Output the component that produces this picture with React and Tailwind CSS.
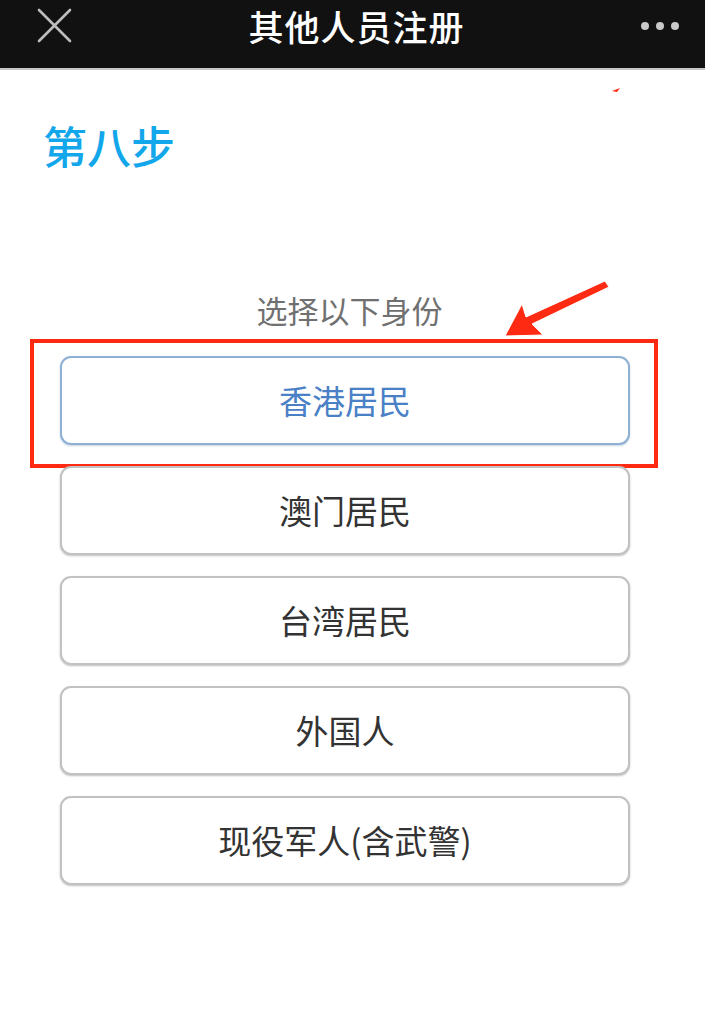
import React from 'react';

const options = ['香港居民', '澳门居民', '台湾居民', '外国人', '现役军人(含武警)'];

const font = { fontFamily: '"Noto Sans CJK SC", "Noto Sans", sans-serif' };

const App = () => {
  return (
    <div className="relative w-[705px] min-h-[1024px] bg-white" style={font}>
      {/* Top bar */}
      <div className="h-[68px] bg-[#111111] flex items-start justify-between px-[36px] border-b-2 border-[#c8c8c8] box-content">
        <svg width="36" height="36" viewBox="0 0 36 36" className="mt-[8px]">
          <path d="M3 2 L34 33 M34 2 L3 33" stroke="#bdbdbd" strokeWidth="2.6" strokeLinecap="round" />
        </svg>
        <div className="text-white text-[35px] font-medium leading-[44px] tracking-[1px] mt-[4px]">其他人员注册</div>
        <div className="flex gap-[7px] -mr-[10px] mt-[22px]">
          <span className="w-[8px] h-[8px] rounded-full bg-[#c9c9c9]" />
          <span className="w-[8px] h-[8px] rounded-full bg-[#c9c9c9]" />
          <span className="w-[8px] h-[8px] rounded-full bg-[#c9c9c9]" />
        </div>
      </div>

      {/* Step heading */}
      <div className="pl-[43px] pt-[53px] text-[44px] leading-none font-medium text-[#12a6ea]">第八步</div>

      <div className="mt-[127px] text-center text-[31px] leading-none text-[#707070] pr-[6px]">选择以下身份</div>

      {/* Options */}
      <div className="mt-[31px] px-[60px] pr-[75px] flex flex-col gap-[21px]">
        {options.map((opt, i) => (
          <div key={opt} className="relative">
            <button
              className={
                i === 0
                  ? 'w-full h-[89px] rounded-[11px] border-2 border-[#8fb1d4] bg-white text-[#4a80c6] text-[33px] shadow-[0_1px_2px_rgba(90,130,180,0.35)]'
                  : 'w-full h-[89px] rounded-[11px] border-2 border-[#c2c2c2] bg-white text-[#333333] text-[33px] shadow-[0_1px_2px_rgba(0,0,0,0.25)]'
              }
            >
              {opt}
            </button>
            {i === 0 && (
              <div className="absolute -top-[17px] -left-[30px] -right-[28px] -bottom-[23px] border-[4px] border-[#ff2a12] pointer-events-none" />
            )}
          </div>
        ))}
      </div>

      {/* Annotation arrow */}
      <svg className="absolute left-0 top-0 pointer-events-none" width="705" height="400" viewBox="0 0 705 400">
        <path
          d="M605 281 L609 287 L532 324 L543 335 L505 336 L522 304 L526 317 Z"
          fill="#ff2a12"
          stroke="#ffffff"
          strokeWidth="1"
          strokeLinejoin="round"
        />
        <path d="M612 91 L620 88 L617 92 Z" fill="#ff2a12" />
      </svg>
    </div>
  );
};

export default App;
